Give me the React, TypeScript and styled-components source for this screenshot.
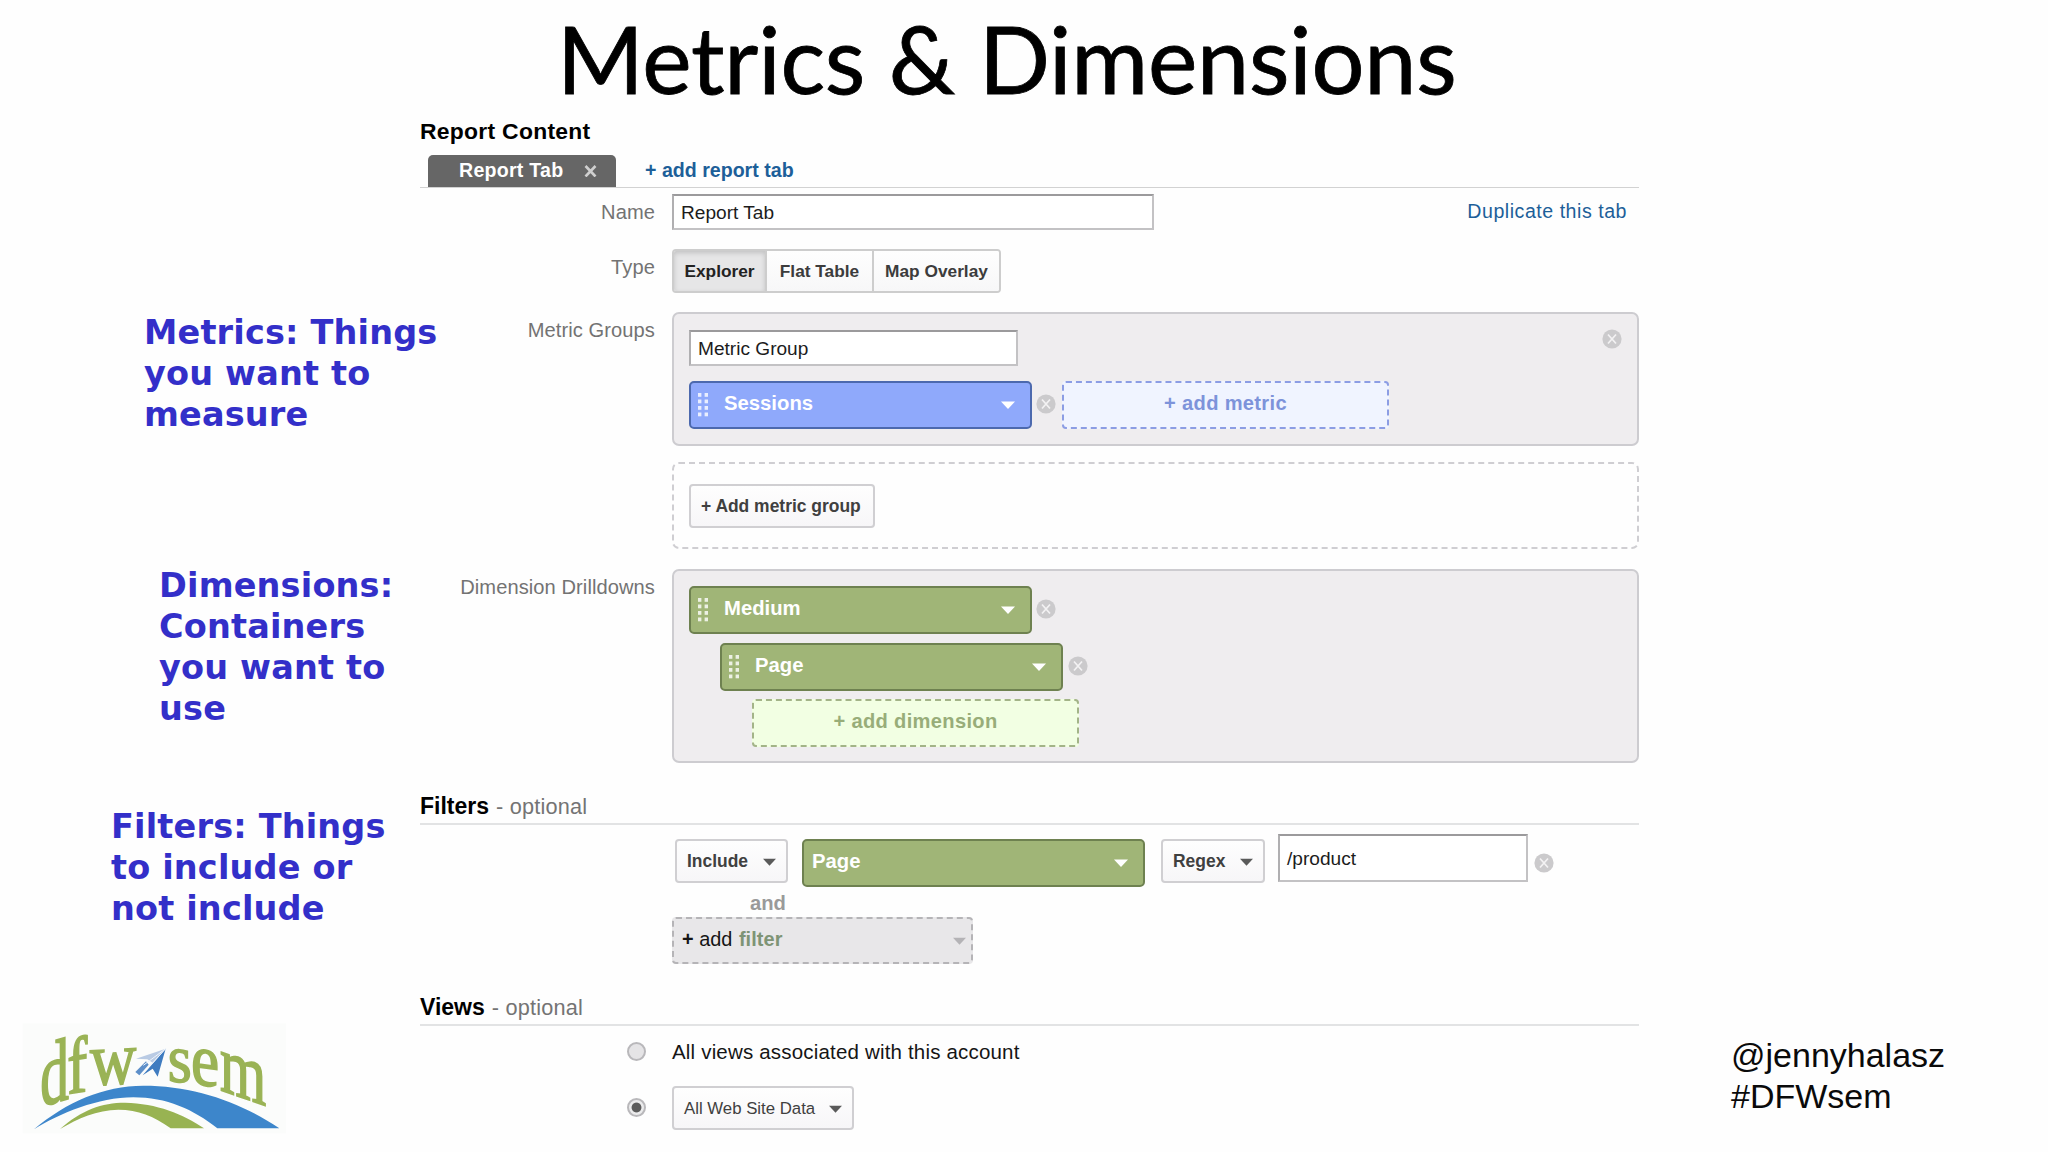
import React from 'react';
import styled, { createGlobalStyle, css } from 'styled-components';

const GlobalStyle = createGlobalStyle`
  * { box-sizing: border-box; }
  body { margin: 0; background: #fefefe; font-family: "Liberation Sans", Arial, sans-serif; }
`;

const Slide = styled.main`
  width: 2048px;
  height: 1152px;
  overflow: hidden;
  background: #fefefe;
  display: flex;
  flex-direction: column;
`;

const Header = styled.header`
  height: 112px;
  padding-left: 557px;
`;

const Title = styled.h1`
  margin: 0;
  font: 400 93.5px/117px Lato, "Open Sans", sans-serif;
  letter-spacing: -0.2px;
  color: #000;
  white-space: nowrap;
  -webkit-text-stroke: 0.8px #000;
`;

const Body = styled.div`
  flex: 1;
  display: grid;
  grid-template-columns: 420px 1219px 1fr;
`;

const Notes = styled.aside`
  display: flex;
  flex-direction: column;
  min-width: 0;
`;

const Note = styled.p<{ $left: number; $top: number }>`
  margin: ${p => p.$top}px 0 0 ${p => p.$left}px;
  font: 700 33.5px/41px "DejaVu Sans", Verdana, sans-serif;
  letter-spacing: 0.17px;
  color: #332fc9;
  white-space: nowrap;
`;

const Logo = styled.svg`
  display: block;
  width: 300px;
  height: 142px;
  margin: auto 0 0 10px;
`;

const Credit = styled.footer`
  align-self: end;
  margin: 0 0 35px 92px;
  font-size: 34px;
  line-height: 41px;
  color: #0a0a0a;
`;

const Form = styled.section`
  display: flex;
  flex-direction: column;
`;

const FormTitle = styled.h2`
  margin: 0;
  font-size: 22.9px;
  line-height: 39px;
  letter-spacing: 0.28px;
  color: #000;
`;

const Tabs = styled.div`
  height: 37px;
  padding-left: 8px;
  display: flex;
  align-items: flex-end;
  gap: 29px;
  border-bottom: 1px solid #d2d2d2;
`;

const Tab = styled.div`
  width: 188px;
  height: 32px;
  padding: 0 19px 1px 31px;
  display: flex;
  align-items: center;
  justify-content: space-between;
  border-radius: 5px 5px 0 0;
  background: #666;
  color: #fff;
  font-weight: 700;
  font-size: 19.6px;
  letter-spacing: 0.25px;
`;

const Link = styled.a<{ $bold?: boolean }>`
  color: #1d5f99;
  font-size: 19.6px;
  white-space: nowrap;
  ${p => p.$bold ? css`
    font-weight: 700;
    line-height: 33px;
  ` : css`
    margin-left: auto;
    margin-right: 12px;
    line-height: 34px;
    letter-spacing: 0.52px;
  `}
`;

const Row = styled.div<{ $top: number }>`
  margin-top: ${p => p.$top}px;
  display: flex;
  align-items: flex-start;
`;

const Label = styled.label`
  width: 252px;
  height: 36px;
  padding-right: 17px;
  text-align: right;
  font-size: 20.1px;
  line-height: 37px;
  letter-spacing: 0.08px;
  color: #737373;
  white-space: nowrap;
`;

const Field = styled.div<{ $w: number; $h?: number }>`
  width: ${p => p.$w}px;
  height: ${p => p.$h ?? 36}px;
  padding: 2px 0 0 7px;
  display: flex;
  align-items: center;
  border: 2px solid #c3c2c4;
  border-top-color: #9b9a9c;
  border-left-color: #b0afb1;
  background: #fff;
  color: #1c1c1c;
  font-size: 19.1px;
`;

const Segments = styled.div`
  height: 44px;
  display: flex;
  border: 2px solid #cdcdcd;
  border-radius: 4px;
  overflow: hidden;
`;

const Segment = styled.button<{ $w: number; $active?: boolean }>`
  width: ${p => p.$w}px;
  padding: 1px 0 0;
  border: 0;
  border-left: ${p => (p.$active ? 0 : 2)}px solid #cdcdcd;
  background: ${p => (p.$active ? '#e6e6e7' : 'linear-gradient(#fefefe, #f7f7f8)')};
  box-shadow: ${p => (p.$active ? 'inset 0 2px 5px rgba(0,0,0,.16)' : 'none')};
  color: ${p => (p.$active ? '#222' : '#3c3c3c')};
  font: 700 17.3px "Liberation Sans", Arial, sans-serif;
`;

const Button = styled.button<{ $w: number; $plain?: boolean }>`
  width: ${p => p.$w}px;
  height: 44px;
  padding: 1px 10px 0 10px;
  display: flex;
  align-items: center;
  justify-content: space-between;
  border: 2px solid #d0cfd2;
  border-radius: 4px;
  background: linear-gradient(#fefefe, #f7f6f8);
  color: #404040;
  font: ${p => (p.$plain ? 400 : 700)} ${p => (p.$plain ? 16.8 : 17.45)}px "Liberation Sans", Arial, sans-serif;
  white-space: nowrap;
`;

const Stack = styled.div`
  width: 967px;
`;

const Panel = styled.div<{ $h: number; $pad: number }>`
  width: 967px;
  height: ${p => p.$h}px;
  padding: ${p => p.$pad}px 15px 0;
  border: 2px solid #cdccd0;
  border-radius: 7px;
  background: #efedef;
`;

const PanelRow = styled.div<{ $indent?: number; $top?: number }>`
  display: flex;
  align-items: center;
  margin: ${p => p.$top ?? 0}px 0 0 ${p => p.$indent ?? 0}px;
`;

const PanelHead = styled.div`
  display: flex;
  justify-content: space-between;
  align-items: flex-start;

  > svg { margin-top: -1px; }
`;

const DropZone = styled.div`
  height: 87px;
  margin-top: 16px;
  padding: 20px 15px;
  border: 2px dashed #cfced2;
  border-radius: 7px;
`;

const tones = {
  blue: { bg: '#8fa9fb', line: '#4c69ae', soft: '#f0f4ff', dash: '#8c9de4', text: '#7d93da' },
  green: { bg: '#a0b577', line: '#6e8150', soft: '#f2ffe3', dash: '#a3b488', text: '#98ad79' },
};
type Tone = keyof typeof tones;

const Pill = styled.div<{ $tone: Tone; $bare?: boolean }>`
  width: 343px;
  height: 48px;
  padding: 0 15px 0 ${p => (p.$bare ? 8 : 6)}px;
  display: flex;
  align-items: center;
  border: 2px solid ${p => tones[p.$tone].line};
  border-radius: 5px;
  background: ${p => tones[p.$tone].bg};
  color: #fff;
`;

const PillText = styled.span<{ $bare?: boolean }>`
  flex: 1;
  margin-left: ${p => (p.$bare ? 0 : 15)}px;
  padding-bottom: 4px;
  font-weight: 700;
  font-size: 20.3px;
`;

const AddSlot = styled.div<{ $tone: Tone; $left?: number }>`
  width: 327px;
  height: 48px;
  margin-left: ${p => p.$left ?? 0}px;
  padding-bottom: 4px;
  display: flex;
  align-items: center;
  justify-content: center;
  border: 2px dashed ${p => tones[p.$tone].dash};
  border-radius: 4px;
  background: ${p => tones[p.$tone].soft};
  color: ${p => tones[p.$tone].text};
  font-weight: 700;
  font-size: 20.1px;
  letter-spacing: 0.33px;
`;

const SectionHead = styled.h2`
  height: 38px;
  margin: 24px 0 0;
  border-bottom: 2px solid #e2e3e4;
  font-size: 23px;
  line-height: 38px;
  color: #000;
`;

const Optional = styled.span`
  margin-left: 7px;
  font-weight: 400;
  font-size: 21.7px;
  letter-spacing: 0.2px;
  color: #747474;
`;

const FilterRow = styled.div`
  height: 54px;
  margin-top: 9px;
  padding-left: 255px;
  display: flex;
  align-items: flex-start;
`;

const Slot = styled.div<{ $top: number; $left: number }>`
  margin: ${p => p.$top}px 0 0 ${p => p.$left}px;

  > svg { display: block; }
`;

const Conjunction = styled.div`
  padding-left: 330px;
  font-weight: 700;
  font-size: 20.2px;
  line-height: 30px;
  height: 29px;
  color: #9a9a9a;
`;

const AddFilter = styled.div`
  width: 301px;
  height: 47px;
  margin-left: 252px;
  padding: 0 5px 0 8px;
  display: flex;
  align-items: center;
  border: 2px dashed #b5b4b7;
  border-radius: 4px;
  background: #e8e7e9;
  font-size: 19.9px;
  color: #151515;

  span { flex: 1; padding-bottom: 3px; }
  b { color: #7e9475; margin-left: 1px; letter-spacing: 0.1px; }
  i { font-style: normal; font-weight: 700; color: #151515; }
`;

const RadioRow = styled.div<{ $top: number; $h: number }>`
  height: ${p => p.$h}px;
  margin-top: ${p => p.$top}px;
  padding-left: 207px;
  display: flex;
  align-items: center;
  gap: 26px;
  font-size: 20.5px;
  letter-spacing: 0.18px;
  color: #151515;
`;

const Radio = styled.span<{ $on?: boolean }>`
  width: 19px;
  height: 19px;
  margin-bottom: 1px;
  border: 2px solid #b9b8bb;
  border-radius: 50%;
  background: ${p => (p.$on ? 'radial-gradient(circle, #5c5c5c 0 4.4px, #ebebec 5.4px)' : '#e5e4e6')};
`;

const Caret = ({ color, w = 14 }: { color: string; w?: number }) => (
  <svg width={w} height="8" viewBox="0 0 14 8"><path d="M0 0.5H14L7 8Z" fill={color} /></svg>
);

const Remove = () => (
  <svg width="20" height="20" viewBox="0 0 20 20">
    <circle cx="10" cy="10" r="9.6" fill="#cbcacc" />
    <path d="M6 5.5L14 14.5M14 5.5L6 14.5" stroke="#f3f2f3" strokeWidth="1.7" />
  </svg>
);

const Grip = () => (
  <svg width="12" height="24" viewBox="0 0 12 24" fill="#fff" fillOpacity="0.8">
    {[0, 6.5, 13, 19.5].map(y => (
      <React.Fragment key={y}>
        <rect x="1" y={y} width="3.4" height="3.8" />
        <rect x="7.6" y={y} width="3.4" height="3.8" />
      </React.Fragment>
    ))}
  </svg>
);

const CloseMark = () => (
  <svg width="13" height="13" viewBox="0 0 13 13">
    <path d="M1.5 2L11.5 12.5M11.5 2L1.5 12.5" stroke="#cfcfcf" strokeWidth="2.6" />
  </svg>
);

const letters: [string, number, number, number, number, number][] = [
  ['d', 91, 290, -16, 1.72, 2.68],
  ['f', 172, 252, -9, 1.8, 2.38],
  ['w', 240, 226, -3, 1.92, 2.25],
  ['s', 473, 213, 4, 1.85, 2.05],
  ['e', 543, 220, 8, 1.9, 2.25],
  ['m', 630, 240, 19, 1.78, 2.5],
];

const DfwSemLogo = () => (
  <Logo viewBox="0 0 900 426">
    <rect x="38" y="40" width="790" height="330" fill="#fbfcfb" />
    <g fill="#9ab355" stroke="#9ab355" strokeWidth="2.2" fontFamily="Liberation Serif, serif" fontSize="100">
      {letters.map(([ch, x, y, skew, sx, sy]) => (
        <text key={ch} transform={`translate(${x} ${y}) skewY(${skew}) scale(${sx} ${sy})`}>{ch}</text>
      ))}
    </g>
    <path d="M72 358C170 275 280 228 400 227C550 227 690 275 808 355H622C550 298 470 262 370 262C265 262 150 310 72 358Z" fill="#3d86cb" />
    <path d="M150 357C215 300 275 278 345 278C440 280 520 312 582 355H482C430 318 385 299 325 299C260 300 205 325 150 357Z" fill="#98b352" />
    <path d="M378 146L467 116L428 158L412 148Z" fill="#b9cbe4" />
    <path d="M376 186L408 154L416 164L388 196Z" fill="#5d8fc9" />
    <path d="M467 116L443 200L428 176L398 196Z" fill="#3f7cc0" />
    <path d="M467 116L400 166M467 116L418 170" stroke="#eef4fb" strokeWidth="3" />
  </Logo>
);

export default function App() {
  return (
    <Slide>
      <GlobalStyle />
      <Header><Title>Metrics &amp; Dimensions</Title></Header>
      <Body>
        <Notes>
          <Note $left={144} $top={200}>Metrics: Things<br />you want to<br />measure</Note>
          <Note $left={159} $top={130}>Dimensions:<br />Containers<br />you want to<br />use</Note>
          <Note $left={111} $top={77}>Filters: Things<br />to include or<br />not include</Note>
          <DfwSemLogo />
        </Notes>

        <Form>
          <FormTitle>Report Content</FormTitle>
          <Tabs>
            <Tab>Report Tab <CloseMark /></Tab>
            <Link $bold>+ add report tab</Link>
          </Tabs>

          <Row $top={6}>
            <Label>Name</Label>
            <Field $w={482}>Report Tab</Field>
            <Link>Duplicate this tab</Link>
          </Row>

          <Row $top={19}>
            <Label>Type</Label>
            <Segments>
              <Segment $w={91} $active>Explorer</Segment>
              <Segment $w={107}>Flat Table</Segment>
              <Segment $w={127}>Map Overlay</Segment>
            </Segments>
          </Row>

          <Row $top={19}>
            <Label>Metric Groups</Label>
            <Stack>
              <Panel $h={134} $pad={16}>
                <PanelHead>
                  <Field $w={329}>Metric Group</Field>
                  <Remove />
                </PanelHead>
                <PanelRow $top={15}>
                  <Pill $tone="blue"><Grip /><PillText>Sessions</PillText><Caret color="#fff" /></Pill>
                  <Slot $top={-2} $left={4}><Remove /></Slot>
                  <AddSlot $tone="blue" $left={6}>+ add metric</AddSlot>
                </PanelRow>
              </Panel>
              <DropZone><Button $w={186}>+ Add metric group</Button></DropZone>
            </Stack>
          </Row>

          <Row $top={20}>
            <Label>Dimension Drilldowns</Label>
            <Panel $h={194} $pad={15}>
              <PanelRow>
                <Pill $tone="green"><Grip /><PillText>Medium</PillText><Caret color="#fff" /></Pill>
                <Slot $top={-2} $left={4}><Remove /></Slot>
              </PanelRow>
              <PanelRow $indent={31} $top={9}>
                <Pill $tone="green"><Grip /><PillText>Page</PillText><Caret color="#fff" /></Pill>
                <Slot $top={-2} $left={5}><Remove /></Slot>
              </PanelRow>
              <PanelRow $indent={63} $top={8}>
                <AddSlot $tone="green">+ add dimension</AddSlot>
              </PanelRow>
            </Panel>
          </Row>

          <SectionHead>Filters<Optional>- optional</Optional></SectionHead>
          <FilterRow>
            <Slot $top={5} $left={0}><Button $w={113}>Include <Caret color="#5a5a5a" w={13} /></Button></Slot>
            <Slot $top={5} $left={14}>
              <Pill $tone="green" $bare><PillText $bare>Page</PillText><Caret color="#fff" /></Pill>
            </Slot>
            <Slot $top={5} $left={16}><Button $w={104}>Regex <Caret color="#5a5a5a" w={13} /></Button></Slot>
            <Slot $top={0} $left={13}><Field $w={250} $h={48}>/product</Field></Slot>
            <Slot $top={19} $left={6}><Remove /></Slot>
          </FilterRow>
          <Conjunction>and</Conjunction>
          <AddFilter><span><i>+</i> add <b>filter</b></span><Caret color="#b4b3b6" w={13} /></AddFilter>

          <SectionHead>Views<Optional>- optional</Optional></SectionHead>
          <RadioRow $top={11} $h={30}><Radio />All views associated with this account</RadioRow>
          <RadioRow $top={19} $h={44}><Radio $on /><Button $w={182} $plain>All Web Site Data <Caret color="#5a5a5a" w={13} /></Button></RadioRow>
        </Form>

        <Credit>@jennyhalasz<br />#DFWsem</Credit>
      </Body>
    </Slide>
  );
}
